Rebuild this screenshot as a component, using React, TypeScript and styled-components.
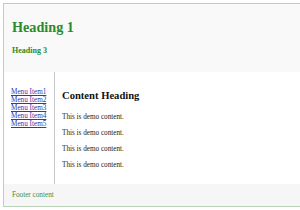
import React from "react";
import styled, {createGlobalStyle} from "styled-components";

const GlobalStyle = createGlobalStyle`
    html, body {
        margin: 0;
        padding: 0;
        overflow: hidden;
        background: white;
    }
    body {
        padding: 3px 0 0 3px;
        font-family: "Liberation Serif", "Times New Roman", serif;
    }
`

const Page = styled.div`
    width: 310px;
    height: 204px;
    border: 1px solid #b9d2b9;
    box-sizing: border-box;
    display: flex;
    flex-direction: column;
    background: white;
`

const Header = styled.header`
    height: 68px;
    box-sizing: border-box;
    padding: 15px 8px 0;
    background: #f9f9f9;

    h1 {
        margin: 0 0 11px;
        font-size: 14.2px;
        line-height: 16px;
        color: #2b8a2b;
    }

    h3 {
        margin: 0;
        font-size: 8px;
        line-height: 9px;
        color: #2b8a2b;
    }
`

const Main = styled.div`
    flex: 1;
    display: flex;
`

const Sidebar = styled.nav`
    width: 51px;
    border-right: 1px solid #c8c8c8;
    padding: 16px 0 0 7px;
    box-sizing: border-box;
    display: flex;
    flex-direction: column;

    a {
        font-size: 7.2px;
        line-height: 8px;
        color: #3535b0;
    }
`

const Content = styled.section`
    flex: 1;
    padding: 18px 0 0 7px;

    h2 {
        margin: 0 0 11px;
        font-size: 10.6px;
        line-height: 12px;
        color: #111;
    }

    p {
        margin: 0 0 8px;
        font-size: 7.2px;
        line-height: 8px;
        color: #222;
    }
`

const Footer = styled.footer`
    height: 22px;
    box-sizing: border-box;
    padding: 7px 8px 0;
    background: #f6f6f6;
    font-size: 7.2px;
    line-height: 8px;
    color: #3f8f3f;
`

const App = () => {
    const items = ["Menu Item1", "Menu Item2", "Menu Item3", "Menu Item4", "Menu Item5"]
    return (
        <>
            <GlobalStyle/>
            <Page>
                <Header>
                    <h1>Heading 1</h1>
                    <h3>Heading 3</h3>
                </Header>
                <Main>
                    <Sidebar>
                        {items.map(item => <a href="#" key={item}>{item}</a>)}
                    </Sidebar>
                    <Content>
                        <h2>Content Heading</h2>
                        <p>This is demo content.</p>
                        <p>This is demo content.</p>
                        <p>This is demo content.</p>
                        <p>This is demo content.</p>
                    </Content>
                </Main>
                <Footer>Footer content</Footer>
            </Page>
        </>
    )
}

export default App
